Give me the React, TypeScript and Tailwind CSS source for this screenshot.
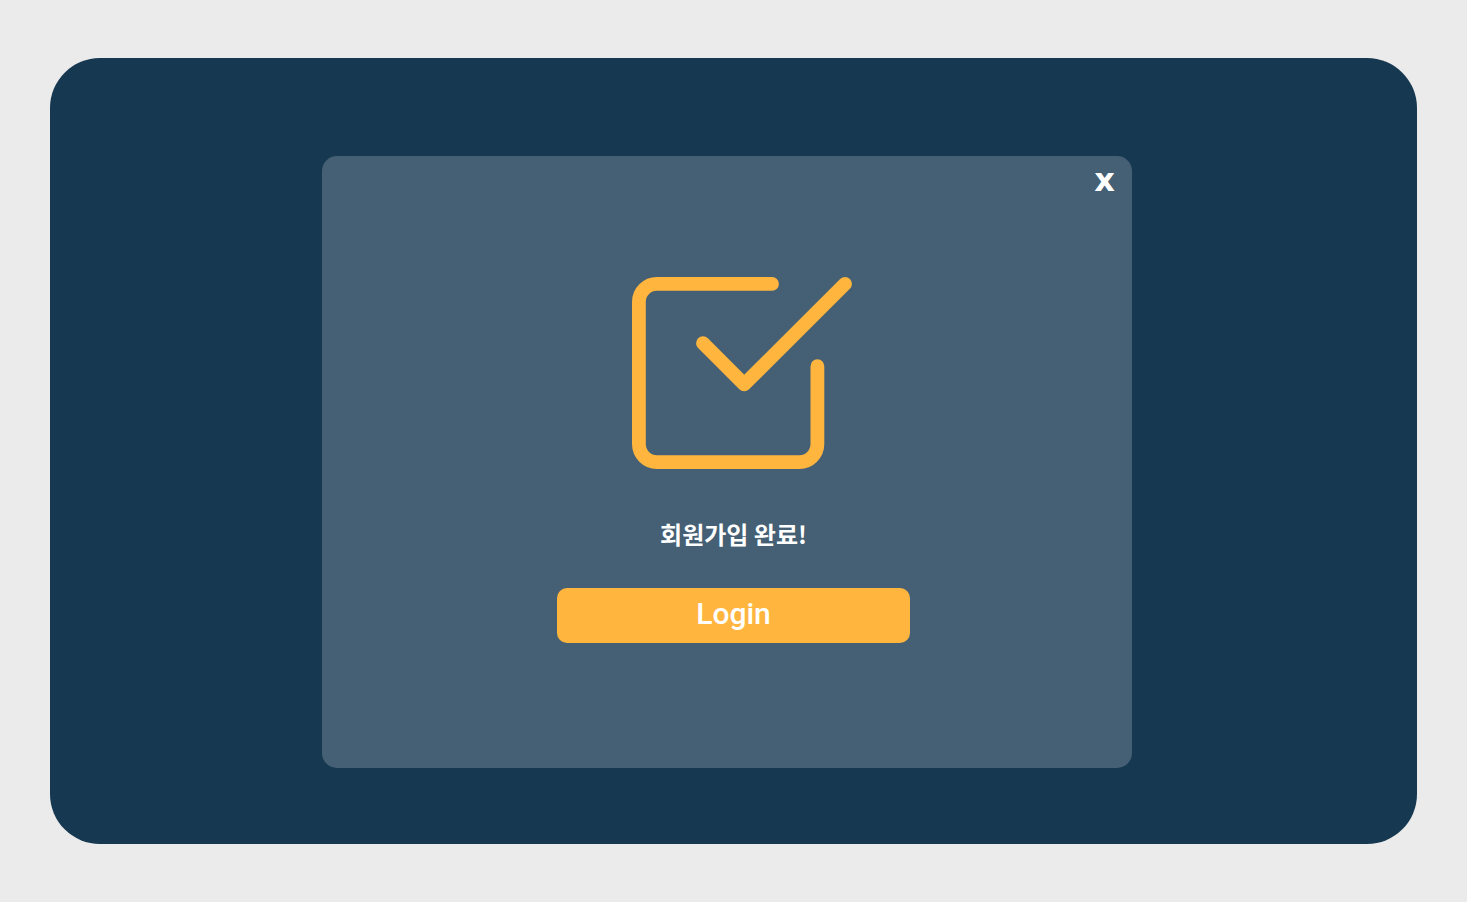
function CheckIcon() {
  return (
    <svg
      viewBox="0 0 220 192"
      className="ml-[17px] w-[220px]"
      fill="none"
      stroke="currentColor"
      strokeWidth="13.8"
      strokeLinecap="round"
      strokeLinejoin="round"
      aria-hidden="true"
    >
      <path d="M140 6.9H24.9a18 18 0 0 0-18 18V167.1a18 18 0 0 0 18 18H167.4a18 18 0 0 0 18-18V89.2" />
      <path d="M71 66.2 112.2 107.4 213 6.9" />
    </svg>
  );
}

export default function App() {
  return (
    <div className="flex min-h-screen bg-[#ebebeb] px-[50px] py-[58px]">
      <main className="flex flex-1 justify-center rounded-[50px] bg-[#163850] pt-[98px] pr-[13px] pb-[76px]">
        <section
          role="dialog"
          aria-labelledby="dialog-title"
          className="flex w-full max-w-[810px] flex-col rounded-[15px] bg-[#456074] text-white"
        >
          <button
            type="button"
            aria-label="Close"
            className="mr-[17px] flex h-12 cursor-pointer items-center self-end font-['DejaVu_Sans',sans-serif] text-[32px] leading-none font-bold"
          >
            x
          </button>
          <div className="flex flex-1 flex-col items-center pt-[73px] pb-[125px] pl-[13px] text-[#ffb53e]">
            <CheckIcon />
            <h1
              id="dialog-title"
              className="mt-[47px] font-['Noto_Sans_CJK_KR',sans-serif] text-2xl leading-9 font-bold text-white"
            >
              회원가입 완료!
            </h1>
            <button
              type="button"
              className="mt-9 flex h-[55px] w-full max-w-[353px] cursor-pointer items-center justify-center rounded-[10px] bg-[#ffb53e] pb-1 font-['Roboto',sans-serif] text-3xl leading-none font-medium text-white"
            >
              Login
            </button>
          </div>
        </section>
      </main>
    </div>
  );
}
